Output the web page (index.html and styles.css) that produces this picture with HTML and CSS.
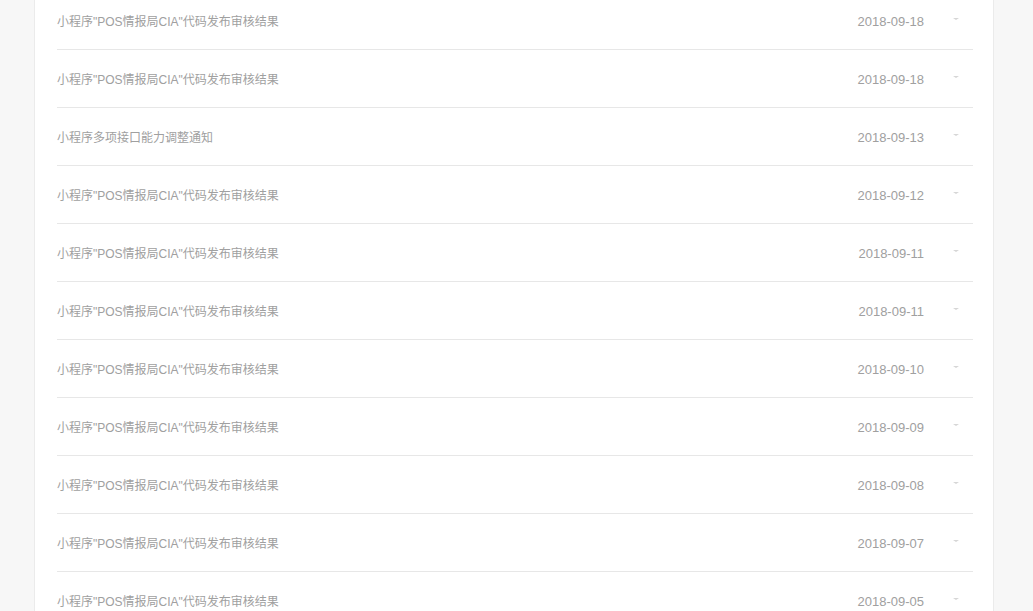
FILE: index.html
```html
<!DOCTYPE html>
<html lang="zh-CN">
<head>
  <meta charset="UTF-8" />
  <meta name="viewport" content="width=device-width, initial-scale=1" />
  <title>通知列表</title>
  <link rel="stylesheet" href="styles.css">
</head>
<body>
  <div class="panel">
    <ul class="notice-list">
      <li class="notice"><span class="title">小程序"POS情报局CIA"代码发布审核结果</span><span class="date">2018-09-18</span><span class="caret"></span></li>
      <li class="notice"><span class="title">小程序"POS情报局CIA"代码发布审核结果</span><span class="date">2018-09-18</span><span class="caret"></span></li>
      <li class="notice"><span class="title">小程序多项接口能力调整通知</span><span class="date">2018-09-13</span><span class="caret"></span></li>
      <li class="notice"><span class="title">小程序"POS情报局CIA"代码发布审核结果</span><span class="date">2018-09-12</span><span class="caret"></span></li>
      <li class="notice"><span class="title">小程序"POS情报局CIA"代码发布审核结果</span><span class="date">2018-09-11</span><span class="caret"></span></li>
      <li class="notice"><span class="title">小程序"POS情报局CIA"代码发布审核结果</span><span class="date">2018-09-11</span><span class="caret"></span></li>
      <li class="notice"><span class="title">小程序"POS情报局CIA"代码发布审核结果</span><span class="date">2018-09-10</span><span class="caret"></span></li>
      <li class="notice"><span class="title">小程序"POS情报局CIA"代码发布审核结果</span><span class="date">2018-09-09</span><span class="caret"></span></li>
      <li class="notice"><span class="title">小程序"POS情报局CIA"代码发布审核结果</span><span class="date">2018-09-08</span><span class="caret"></span></li>
      <li class="notice"><span class="title">小程序"POS情报局CIA"代码发布审核结果</span><span class="date">2018-09-07</span><span class="caret"></span></li>
      <li class="notice"><span class="title">小程序"POS情报局CIA"代码发布审核结果</span><span class="date">2018-09-05</span><span class="caret"></span></li>
    </ul>
  </div>
</body>
</html>
```

FILE: styles.css
```css
* {
  margin: 0;
  padding: 0;
  box-sizing: border-box;
}
html, body {
  height: 100%;
}
body {
  background: #f7f7f7;
  font-family: 'Liberation Sans', 'Noto Sans CJK SC', sans-serif;
  font-size: 12px;
  color: #999;
  overflow: hidden;
}
.panel {
  width: 960px;
  min-height: 100%;
  margin-left: 34px;
  padding: 0 20px 0 22px;
  background: #fff;
  border-left: 1px solid #ebebeb;
  border-right: 1px solid #ebebeb;
}
.notice-list {
  list-style: none;
  margin-top: -8px;
}
.notice {
  display: flex;
  align-items: center;
  height: 58px;
  border-bottom: 1px solid #e7e7e7;
}
.title {
  flex: 1;
  color: #a0a0a0;
}
.date {
  font-size: 13px;
  padding-top: 2px;
  color: #a0a0a0;
}
.caret {
  width: 0;
  height: 0;
  margin: 0 14px 3px 29px;
  border-left: 3px solid transparent;
  border-right: 3px solid transparent;
  border-top: 2px solid #d6d6d6;
}
```
